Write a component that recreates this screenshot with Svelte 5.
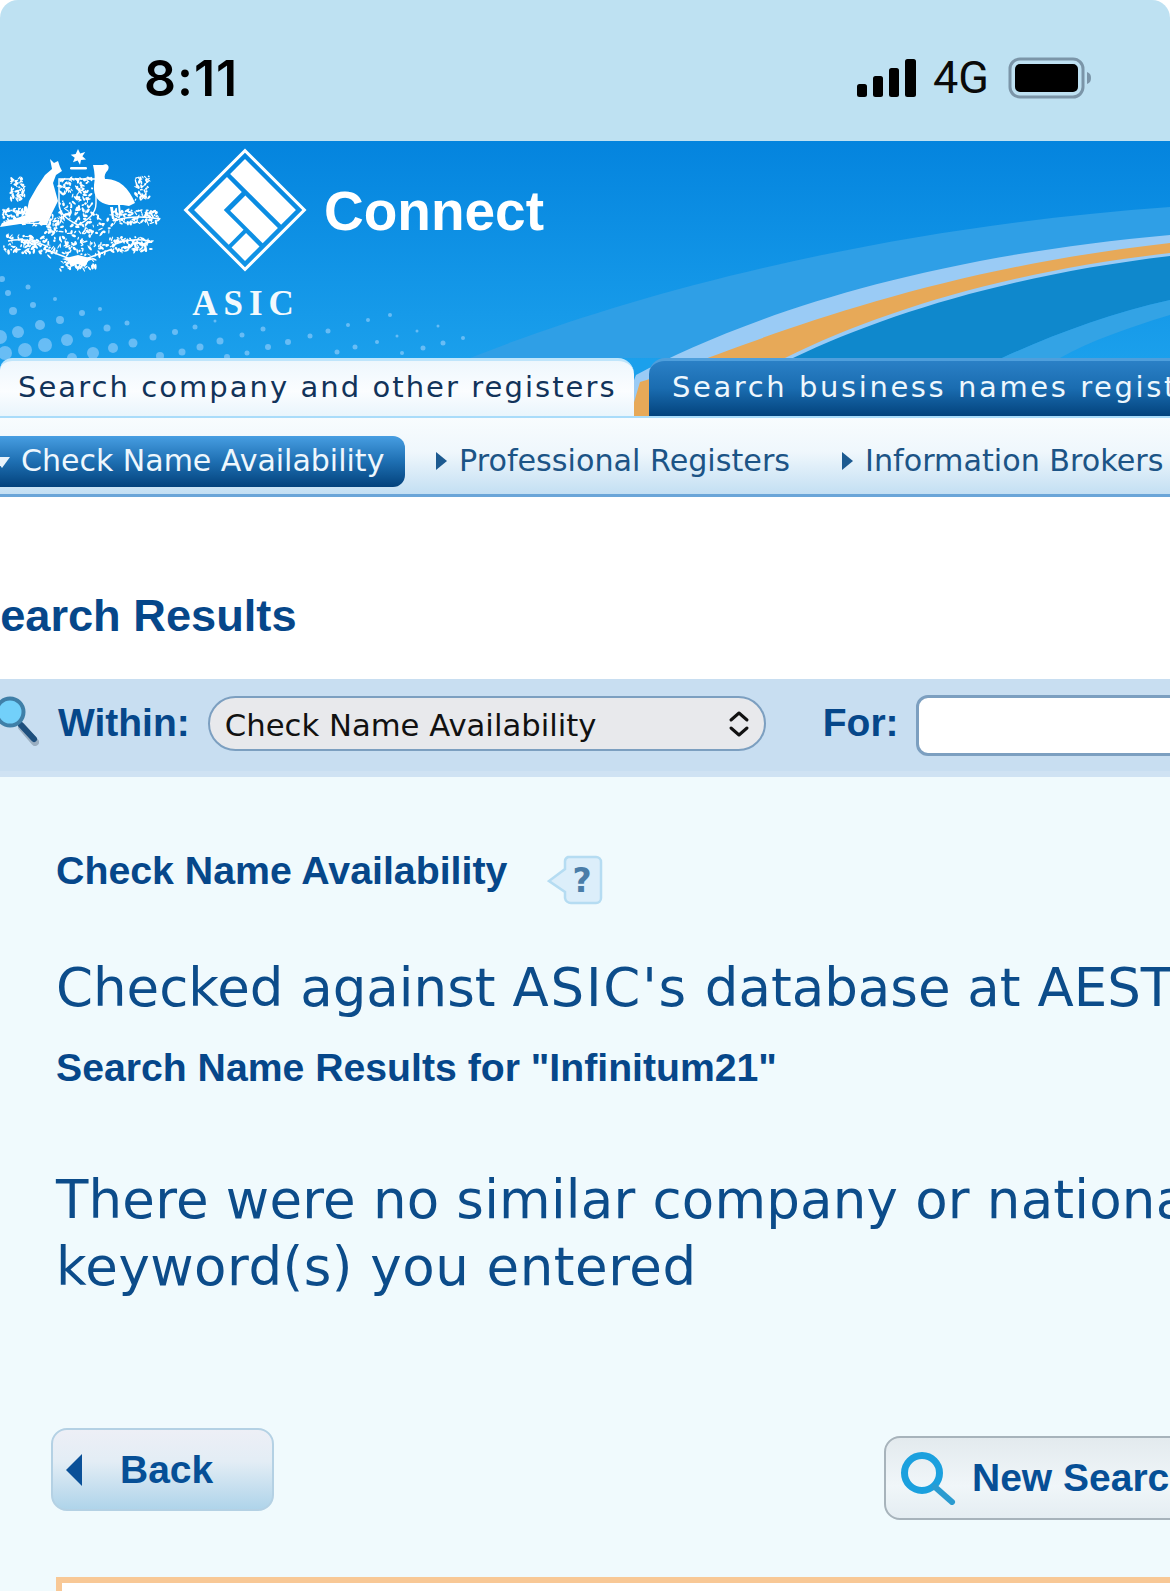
<script>
  function rng(seed) {
    let s = seed;
    return () => ((s = (s * 16807) % 2147483647) - 1) / 2147483646;
  }
  const r = rng(4711);

  // [x, y, radius] of the halftone dots, in header coordinates
  const dots = [
    [25,209,7],[45,204,7],[18,191,6],[67,199,6],[40,184,5],[13,170,4],[8,152,3],[28,146,2.5],[33,164,3],[55,158,2],
    [60,179,4],[87,192,4.5],[113,207,5],[107,187,3.5],[133,202,4.5],[82,172,3],[100,168,2],[127,182,2.5],[153,196,3.5],
    [175,191,3],[195,186,2.5],[182,211,3.5],[200,206,3.5],[220,200,3.5],[242,194,2.5],[263,188,2.5],[215,180,1.5],
    [288,201,3],[268,206,3],[247,212,2.5],[310,195,2.5],[328,190,2.5],[348,184,2],[368,179,2],[390,174,2],[337,211,2.5],
    [355,206,2.5],[377,201,2],[397,195,1.5],[417,190,1.5],[438,185,1.5],[423,207,2.5],[443,202,2.5],[463,197,2],
    [402,212,2],[0,196,7],[5,212,7],[93,212,6],[72,217,5],[160,215,4],[227,216,3],[2,138,3]
  ];

  // foliage clusters of the crest: x, y, half-width, half-height, count
  const clusters = [
    [18,47,7,12,50],[142,47,7,12,50],[22,76,20,9,80],[136,76,23,7,80],
    [24,103,21,9,80],[132,103,21,7,80],[78,94,34,22,180],[78,123,18,6,44],[76,56,17,19,110]
  ];
  const leaves = [];
  for (const [cx, cy, hw, hh, n] of clusters) {
    for (let i = 0; i < n; i++) {
      const x = cx + (r() * 2 - 1) * hw;
      const y = cy + (r() * 2 - 1) * hh;
      leaves.push({ x, y, w: 0.8 + r() * 2.2, h: 0.5 + r() * 0.9, t: r() * 180 });
    }
  }
</script>

<div class="page">
  <div class="status">
    <span class="time">8:11</span>
    <div class="indicators">
      <svg class="signal" width="59" height="38" viewBox="0 0 59 38" aria-hidden="true">
        <rect x="0" y="25" width="10" height="13" rx="2.5" />
        <rect x="16" y="17" width="10" height="21" rx="2.5" />
        <rect x="32" y="9" width="10" height="29" rx="2.5" />
        <rect x="48" y="0" width="11" height="38" rx="2.5" />
      </svg>
      <span class="net">4G</span>
      <svg class="battery" width="84" height="42" viewBox="0 0 84 42" aria-hidden="true">
        <rect x="2" y="2" width="73" height="38" rx="10" fill="none" stroke="#7b95a8" stroke-width="3" />
        <rect x="7" y="7" width="63" height="28" rx="5" fill="#000" />
        <path d="M79 15c3 1 4 3 4 6s-1 5-4 6z" fill="#7b95a8" />
      </svg>
    </div>
  </div>

  <header class="hero">
    <svg class="art" width="1170" height="275" viewBox="0 0 1170 275" aria-hidden="true">
      <defs>
        <linearGradient id="sky" x1="0" y1="0" x2="0" y2="1">
          <stop offset="0" stop-color="#0484de" />
          <stop offset=".8" stop-color="#1ba0ec" />
        </linearGradient>
      </defs>
      <rect width="1170" height="275" fill="url(#sky)" />
      {#each dots as d}
        <circle cx={d[0]} cy={d[1]} r={d[2]} fill="#7cc4f8" opacity=".8" />
      {/each}
      <path d="M470 217C650 145 900 85 1170 66V110L800 217z" fill="#2f9fe6" />
      <path d="M785 217C880 170 1010 130 1170 112V159C1110 172 1050 195 1002 217z" fill="#0f88cc" />
      <path d="M1002 217C1050 195 1110 172 1170 159V174C1130 186 1090 200 1060 217z" fill="#33a3e5" />
      <path d="M636 234C730 184 900 118 1170 94V115C1010 134 885 173 793 217L700 275H620z" fill="#9acbf5" />
      <path d="M640 241C730 212 900 132 1170 102V112C1010 130 880 170 785 217L700 275H630z" fill="#e7a958" />
    </svg>

    <div class="brand">
      <svg class="crest" width="162" height="140" viewBox="0 0 162 140" aria-label="Coat of arms">
        <g fill="#fff">
          <path d="M78 8l2.200 4.400 5-1.400-2.800 4.200 3.600 3.400-5 .3-1 4.900-2.400-4.300-4.600 1.800 1.700-4.600-4-3 5-.6z" />
          <rect x="70" y="26" width="17" height="2.500" rx="1.200" />
          <path d="M50 18l4 4 4-2 2 6 2 4-6 4-3 8 5 18-6 12-5 12h-7v-4L0 86l2-4 24-8 3-14 8-14 8-12 7-6z" />
          <path d="M103 24c4-2 7 1 5 5-3 3-4 6-3 9 12-1 24 8 30 24l-6 3-6-1h-14c-10-2-16-8-15-20 1-6 1-12-1-20z" />
          <path d="M110 66l2 12h2l-1-12zM118 64l1 10h2l-1-10z" />
          <path d="M62 118l16-4 16 4-6 2-3 6-7-3-7 3-3-6z" />
          {#each leaves as l}
            <ellipse cx={l.x} cy={l.y} rx={l.w} ry={l.h} transform="rotate({l.t} {l.x} {l.y})" />
          {/each}
        </g>
        <g stroke="#fff" stroke-width="1.400" fill="none">
          <path d="M59 38h37v24c0 11-8 17-18 22-10-5-19-11-19-22z" />
          <path d="M2 84c14-3 30-2 44-1M160 78c-16-3-30-3-44 1M8 100c14-3 28 0 40 6M150 100c-16-3-30 0-40 6M44 108c12 5 24 8 34 14M112 108c-12 5-24 8-34 14" />
        </g>
      </svg>

      <div class="asic">
        <svg class="mark" width="124" height="124" viewBox="-62 -62 124 124" aria-label="ASIC logo">
          <g transform="rotate(45)">
            <rect x="-42" y="-42" width="84" height="84" fill="none" stroke="#fff" stroke-width="3" />
            <g fill="#fff">
              <rect x="-36" y="-36" width="72" height="21" />
              <path d="M-36-10.500H-15V15H13V36H-36z" />
              <rect x="-10" y="-10.500" width="46" height="21.500" />
              <rect x="17" y="15.500" width="19" height="20.500" />
            </g>
          </g>
        </svg>
        <span class="asic-word">ASIC</span>
      </div>
      <span class="connect">Connect</span>
    </div>

    <nav class="tabs">
      <span class="tab on">Search company and other registers</span>
      <span class="tab off">Search business names registers</span>
    </nav>
  </header>

  <nav class="subnav">
    <span class="pill"><i class="down"></i>Check Name Availability</span>
    <span class="sublink first"><i class="right"></i>Professional Registers</span>
    <span class="sublink"><i class="right"></i>Information Brokers</span>
  </nav>

  <h1>Search Results</h1>

  <div class="searchbar">
    <svg class="lens" width="42" height="52" viewBox="0 0 42 52" aria-hidden="true">
      <path d="M22 31l13 15" stroke="#6d7f91" stroke-width="8" stroke-linecap="round" opacity=".5" />
      <path d="M21 29l13 14" stroke="#1e4f7d" stroke-width="6" stroke-linecap="round" />
      <circle cx="10" cy="16" r="13.500" fill="#72d0fa" stroke="#3f7fa8" stroke-width="4" />
    </svg>
    <label class="lbl" for="within">Within:</label>
    <div class="select" id="within">
      <span>Check Name Availability</span>
      <svg width="22" height="28" viewBox="0 0 22 28" aria-hidden="true">
        <path d="M3 10l8-7 8 7M3 18l8 7 8-7" fill="none" stroke="#111" stroke-width="3" stroke-linecap="round" stroke-linejoin="round" />
      </svg>
    </div>
    <span class="lbl for">For:</span>
    <div class="field"></div>
  </div>

  <main class="content">
    <div class="titlerow">
      <h2>Check Name Availability</h2>
      <svg class="help" width="56" height="50" viewBox="0 0 56 50" aria-label="Help">
        <path d="M21 2h28a5 5 0 0 1 5 5v36a5 5 0 0 1-5 5H24a6 6 0 0 1-6-5v-6L2 26l16-12V7a5 5 0 0 1 3-5z" fill="#dceefa" stroke="#b5dcf2" stroke-width="2.500" />
        <text x="35" y="37" class="qm">?</text>
      </svg>
    </div>
    <p class="big checked">Checked against <span class="acr">ASIC's</span> database at AEST</p>
    <h3>Search Name Results for "Infinitum21"</h3>
    <p class="big none"><span class="line1">There were no similar company or national</span><br /><span class="wide">keyword(s) you entered</span></p>
    <div class="actions">
      <button class="back"><i></i>Back</button>
      <button class="new">
        <svg width="56" height="54" viewBox="0 0 56 54" aria-hidden="true">
          <circle cx="22" cy="22" r="17.500" fill="none" stroke="#1ba0de" stroke-width="7" />
          <path d="M35 36l17 15" stroke="#2b9bd0" stroke-width="6" stroke-linecap="round" />
        </svg>
        New Search
      </button>
    </div>
    <div class="panel"></div>
  </main>
</div>

<style>
  :global(body) { margin: 0; background: #fff; }
  .page {
    width: 1170px;
    height: 1591px;
    overflow: hidden;
    display: flex;
    flex-direction: column;
    font-family: "Liberation Sans", Arial, sans-serif;
    background: #fff;
  }
  .status {
    flex: none;
    height: 141px;
    background: #bee1f2;
    border-radius: 18px 18px 0 0;
    display: flex;
    align-items: center;
    justify-content: space-between;
    padding: 14px 78px 0 144px;
    box-sizing: border-box;
  }
  .time {
    font-family: Inter, sans-serif;
    font-weight: 600;
    font-size: 50px;
    line-height: 1;
    letter-spacing: 1px;
    color: #000;
  }
  .indicators { display: flex; align-items: center; }
  .signal { fill: #000; margin-right: 17px; }
  .net {
    font-family: Roboto, sans-serif;
    font-size: 45px;
    line-height: 1;
    color: #0a0a0a;
    margin-right: 19px;
  }
  .hero {
    flex: none;
    height: 275px;
    position: relative;
    overflow: hidden;
    display: flex;
    flex-direction: column;
  }
  .art { position: absolute; left: 0; top: 0; }
  .brand {
    position: relative;
    height: 217px;
    display: flex;
    align-items: flex-start;
    flex: none;
  }
  .crest { flex: none; filter: blur(0.5px); }
  .mark { filter: blur(0.4px); }
  .asic {
    display: flex;
    flex-direction: column;
    align-items: center;
    margin: 7px 0 0 21px;
    width: 124px;
    flex: none;
  }
  .asic-word {
    font-family: "Liberation Serif", serif;
    font-weight: 700;
    font-size: 35px;
    line-height: 40px;
    letter-spacing: 6px;
    color: #f2f9fd;
    margin-top: 12px;
    margin-right: -2px;
  }
  .connect {
    font-weight: 700;
    font-size: 55px;
    line-height: 60px;
    color: #fff;
    margin: 40px 0 0 17px;
  }
  .tabs {
    position: relative;
    flex: none;
    height: 58px;
    display: flex;
    gap: 15px;
    white-space: nowrap;
    font-family: "DejaVu Sans", sans-serif;
    font-size: 29px;
    letter-spacing: 2.6px;
  }
  .tab {
    box-sizing: border-box;
    height: 58px;
    line-height: 53px;
  }
  .on {
    width: 634px;
    flex: none;
    padding-left: 18px;
    letter-spacing: 2.05px;
    color: #12335a;
    background: linear-gradient(#eef7fd, #fbfdff 55%, #e9f5fc);
    border-top: 3px solid #bfe5fb;
    border-radius: 12px 16px 0 0;
  }
  .off {
    flex: none;
    width: 600px;
    padding-left: 23px;
    color: #eef7fd;
    background: linear-gradient(#2a80c6, #1a6cb0 50%, #03437d);
    border-top: 3px solid #4f9fdc;
    border-radius: 16px 0 0 0;
  }
  .subnav {
    flex: none;
    box-sizing: border-box;
    height: 81px;
    border-top: 2px solid #a9dcfa;
    border-bottom: 3px solid #6aa5d8;
    background: linear-gradient(#f8fcfe, #eff7fc 45%, #c3dff3);
    display: flex;
    align-items: flex-start;
    padding-top: 18px;
    white-space: nowrap;
    font-family: "DejaVu Sans", sans-serif;
    font-size: 30.200px;
    color: #1c5486;
  }
  .pill {
    flex: none;
    box-sizing: border-box;
    width: 405px;
    height: 51px;
    line-height: 50px;
    padding-left: 21px;
    position: relative;
    font-size: 30px;
    color: #eef7fd;
    border-radius: 0 12px 12px 0;
    background: linear-gradient(#479ee2, #1e6fb2 50%, #03427c);
  }
  .down {
    position: absolute;
    left: -6px;
    top: 21px;
    border: 8px solid transparent;
    border-top: 11px solid #e8f3fb;
    border-bottom: 0;
  }
  .sublink {
    flex: none;
    display: flex;
    align-items: center;
    height: 49px;
    gap: 12px;
    margin-left: 52px;
  }
  .sublink.first { margin-left: 31px; }
  .right {
    flex: none;
    border: 9px solid transparent;
    border-left: 11px solid #1c5a90;
    border-right: 0;
  }
  h1 {
    flex: none;
    margin: 94px 0 0 -30px;
    height: 88px;
    font-size: 45.200px;
    line-height: 50px;
    color: #06478a;
    white-space: nowrap;
  }
  .searchbar {
    flex: none;
    box-sizing: border-box;
    height: 98px;
    background: #c8def1;
    border-bottom: 6px solid #cfe2f3;
    display: flex;
    align-items: flex-start;
    white-space: nowrap;
    padding-top: 14px;
  }
  .lens { flex: none; margin: 3px 16px 0 0; filter: blur(0.5px); }
  .lbl {
    flex: none;
    font-weight: 700;
    font-size: 39px;
    line-height: 54px;
    margin-top: 3px;
    color: #06478a;
  }
  .select {
    flex: none;
    box-sizing: border-box;
    width: 558px;
    height: 55px;
    margin: 3px 0 0 18px;
    padding: 3px 14px 0 15px;
    border: 2.5px solid #7c9fc0;
    border-radius: 28px;
    background: #e8e9ec;
    display: flex;
    align-items: center;
    justify-content: space-between;
    font-family: "DejaVu Sans", sans-serif;
    font-size: 30.700px;
    color: #111;
  }
  .select svg { margin-top: -3px; }
  .for { margin-left: 57px; }
  .field {
    flex: none;
    box-sizing: border-box;
    width: 400px;
    height: 61px;
    margin: 2px 0 0 17px;
    background: #fff;
    border: 3px solid #7c9fc0;
    border-radius: 12px;
  }
  .content {
    flex: 1;
    background: #f0fafd;
    padding: 70px 0 0 56px;
    white-space: nowrap;
    min-height: 0;
  }
  .titlerow { display: flex; align-items: flex-start; height: 74px; }
  h2 {
    margin: 0;
    font-size: 39.300px;
    line-height: 46px;
    color: #06478a;
  }
  .help { margin: 8px 0 0 40px; flex: none; }
  .qm {
    font: 700 33px "DejaVu Sans", sans-serif;
    fill: #4a7da8;
    text-anchor: middle;
  }
  .big {
    margin: 0;
    font-family: "DejaVu Sans", sans-serif;
    font-size: 53px;
    line-height: 67px;
    color: #0c4c8a;
  }
  .acr { letter-spacing: 1.8px; }
  .line1 { letter-spacing: 0.2px; }
  .wide { letter-spacing: 0.5px; }
  .checked { margin-top: 33px; }
  h3 {
    margin: 24px 0 0;
    font-size: 39.200px;
    line-height: 46px;
    color: #06478a;
  }
  .none { margin-top: 75px; }
  .actions {
    display: flex;
    align-items: flex-start;
    margin-top: 128px;
    margin-left: -5px;
  }
  button {
    font-family: "Liberation Sans", Arial, sans-serif;
    font-weight: 700;
    font-size: 39px;
    color: #064f96;
    flex: none;
    box-sizing: border-box;
    display: flex;
    align-items: center;
    padding: 0;
  }
  .back {
    width: 223px;
    height: 83px;
    border: 2px solid #b4d1e4;
    border-radius: 16px;
    background: linear-gradient(#edeff6, #e3edf5 40%, #afd4ea);
    padding-left: 13px;
  }
  .back i {
    flex: none;
    border: 16px solid transparent;
    border-right: 16px solid #0a5098;
    border-left: 0;
    margin-right: 38px;
  }
  .new {
    width: 400px;
    height: 84px;
    margin: 8px 0 0 610px;
    border: 2.500px solid #a7b3bb;
    border-radius: 16px;
    background: linear-gradient(#e3eaee, #f0f6f9 60%, #e4edf2);
    padding-left: 14px;
    gap: 16px;
    white-space: nowrap;
  }
  .panel {
    box-sizing: border-box;
    width: 1200px;
    height: 60px;
    margin-top: 57px;
    border: 6px solid #f8c896;
    background: #fff;
  }
</style>
